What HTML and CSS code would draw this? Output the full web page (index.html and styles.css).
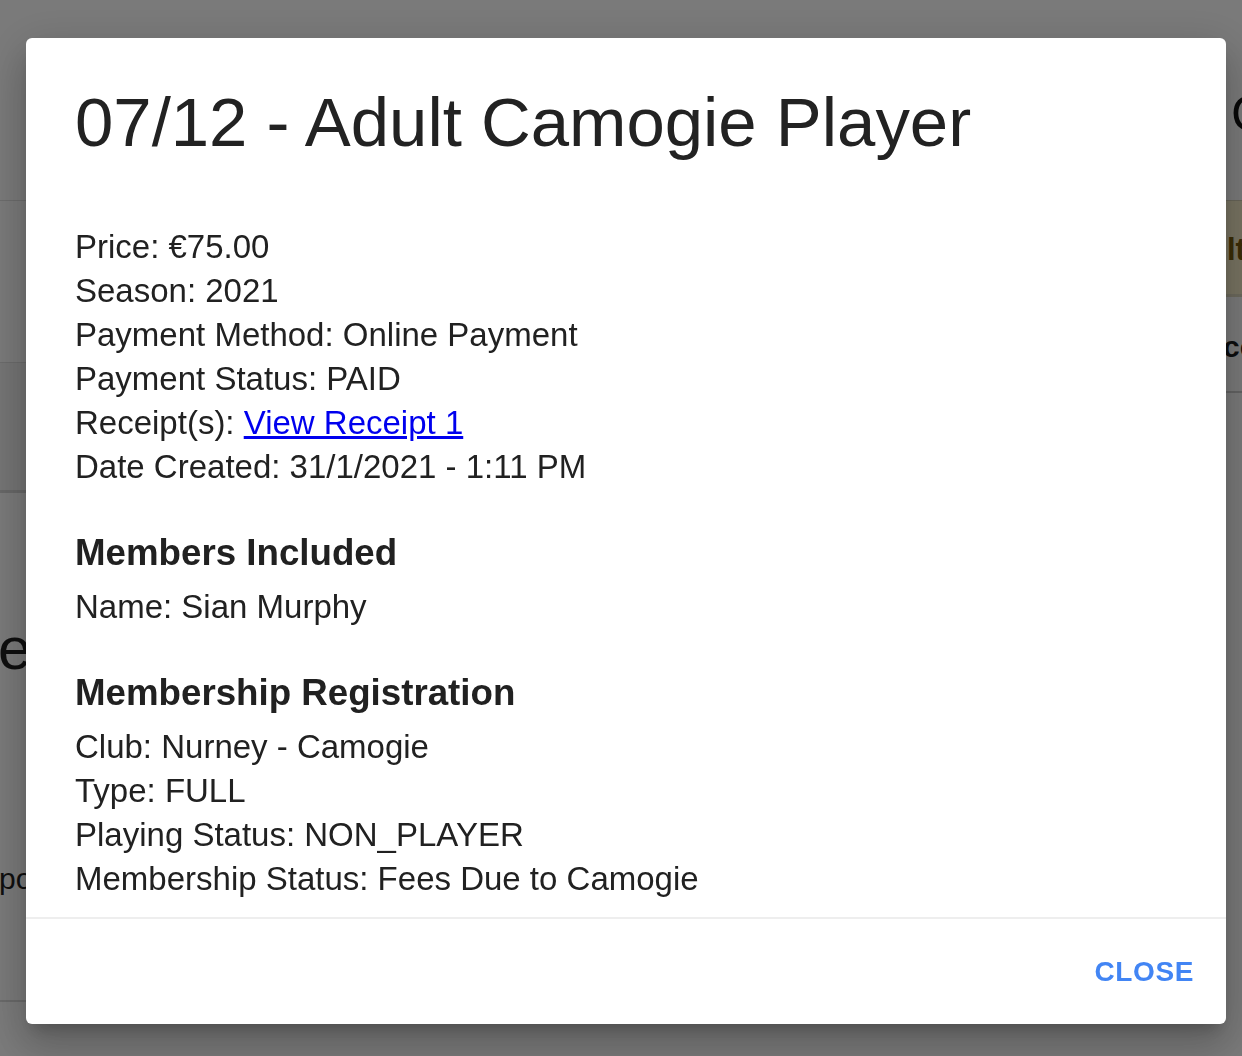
FILE: index.html
```html
<!DOCTYPE html>
<html lang="en">
<head>
<meta charset="utf-8">
<title>Order details</title>
<link rel="stylesheet" href="styles.css">
</head>
<body>
<div class="page">
  <div class="bg-left">
    <div class="bg-head"></div>
    <div class="bg-row-a"></div>
    <div class="bg-row-b"></div>
    <div class="bg-mid">
      <div class="bg-big">e</div>
      <div class="bg-small">po</div>
    </div>
    <div class="bg-foot"></div>
  </div>
  <div class="bg-right">
    <div class="bg-rhead"><span class="bg-title">C</span></div>
    <div class="bg-warn"><span class="bg-warn-text">lt</span></div>
    <div class="bg-rrow"><span class="bg-rrow-text">cc</span></div>
    <div class="bg-rrest"></div>
  </div>
</div>

<div class="overlay">
  <div class="dialog" role="dialog">
    <h2 class="dialog-title">07/12 - Adult Camogie Player</h2>
    <div class="dialog-content">
      <div class="info">
        <p>Price: €75.00</p>
        <p>Season: 2021</p>
        <p>Payment Method: Online Payment</p>
        <p>Payment Status: PAID</p>
        <p>Receipt(s): <a class="link" href="#">View Receipt 1</a></p>
        <p>Date Created: 31/1/2021 - 1:11 PM</p>
      </div>
      <h3 class="section-title">Members Included</h3>
      <div class="info">
        <p>Name: Sian Murphy</p>
      </div>
      <h3 class="section-title">Membership Registration</h3>
      <div class="info">
        <p>Club: Nurney - Camogie</p>
        <p>Type: FULL</p>
        <p>Playing Status: NON_PLAYER</p>
        <p>Membership Status: Fees Due to Camogie</p>
      </div>
    </div>
    <div class="dialog-actions">
      <button class="close-btn" type="button">CLOSE</button>
    </div>
  </div>
</div>
</body>
</html>
```
FILE: styles.css
```css
html, body {
  margin: 0;
  padding: 0;
  height: 100%;
}
body {
  font-family: "Liberation Sans", Arial, Helvetica, sans-serif;
  background: #ffffff;
  overflow: hidden;
  color: #212121;
}

/* ---------- dimmed page behind the dialog ---------- */
.page {
  display: flex;
  height: 1056px;
}
.bg-left {
  width: 300px;
  display: flex;
  flex-direction: column;
}
.bg-head {
  height: 200px;
  flex: none;
}
.bg-row-a {
  height: 162px;
  flex: none;
  box-sizing: border-box;
  border-top: 1px solid #e2e2e2;
  background: #ffffff;
}
.bg-row-b {
  height: 131px;
  flex: none;
  box-sizing: border-box;
  background: #f4f4f4;
  border-top: 1px solid #e0e0e0;
  border-bottom: 3px solid #d8d8d8;
}
.bg-mid {
  height: 507px;
  flex: none;
  white-space: nowrap;
}
.bg-big {
  font-size: 60px;
  line-height: 60px;
  margin-top: 126px;
  margin-left: -2px;
  color: #1f1f1f;
}
.bg-small {
  font-size: 30px;
  line-height: 30px;
  margin-top: 185px;
  margin-left: -1px;
  color: #1f1f1f;
}
.bg-foot {
  flex: 1;
  border-top: 2px solid #dcdcdc;
}

.bg-right {
  margin-left: auto;
  width: 16px;
  display: flex;
  flex-direction: column;
  white-space: nowrap;
}
.bg-rhead {
  height: 200px;
  flex: none;
  box-sizing: border-box;
  padding-top: 84px;
  padding-left: 5px;
}
.bg-title {
  font-size: 50px;
  line-height: 60px;
  color: #111111;
}
.bg-warn {
  height: 97px;
  flex: none;
  box-sizing: border-box;
  background: #fbf0cc;
  border-top: 1px solid #d8d2b8;
  border-bottom: 3px solid #e2dcc2;
  padding-top: 31px;
  padding-left: 1px;
}
.bg-warn-text {
  font-size: 31px;
  line-height: 36px;
  font-weight: 700;
  color: #7a5c0c;
}
.bg-rrow {
  height: 96px;
  flex: none;
  box-sizing: border-box;
  border-bottom: 2px solid #cfcfcf;
  padding-top: 32px;
}
.bg-rrow-text {
  display: inline-block;
  margin-left: -3px;
  font-size: 30px;
  line-height: 36px;
  font-weight: 700;
  color: #1b1b1b;
}
.bg-rrest {
  flex: 1;
}

/* ---------- modal ---------- */
.overlay {
  position: fixed;
  inset: 0;
  background: rgba(0, 0, 0, 0.52);
  display: flex;
  align-items: flex-start;
  justify-content: flex-start;
  padding: 38px 0 0 26px;
  box-sizing: border-box;
}
.dialog {
  width: 1200px;
  height: 986px;
  background: #ffffff;
  border-radius: 6px;
  box-shadow: 0 11px 15px -7px rgba(0, 0, 0, 0.2),
              0 24px 38px 3px rgba(0, 0, 0, 0.14),
              0 9px 46px 8px rgba(0, 0, 0, 0.12);
  display: flex;
  flex-direction: column;
  overflow: hidden;
}
.dialog-title {
  margin: 0;
  padding: 44px 49px 0;
  font-size: 68.9px;
  line-height: 82px;
  font-weight: 400;
  color: #222222;
  flex: none;
}
.dialog-content {
  flex: 1;
  padding: 61px 49px 0;
  font-size: 33px;
  line-height: 44px;
  color: #212121;
  overflow: hidden;
}
.info p {
  margin: 0;
}
.link {
  color: #0000ee;
  text-decoration: underline;
}
.section-title {
  margin: 42px 0 10px;
  font-size: 36.7px;
  line-height: 44px;
  font-weight: 700;
  color: #212121;
}
.dialog-actions {
  flex: none;
  height: 105px;
  border-top: 2px solid #eeeeee;
  display: flex;
  justify-content: flex-end;
  align-items: center;
  padding-right: 32px;
}
.close-btn {
  font-family: "Liberation Sans", Arial, sans-serif;
  font-size: 28px;
  font-weight: 700;
  letter-spacing: 0.6px;
  color: #4285f4;
  background: none;
  border: 0;
  padding: 0;
  margin: 0;
  cursor: pointer;
}
```
